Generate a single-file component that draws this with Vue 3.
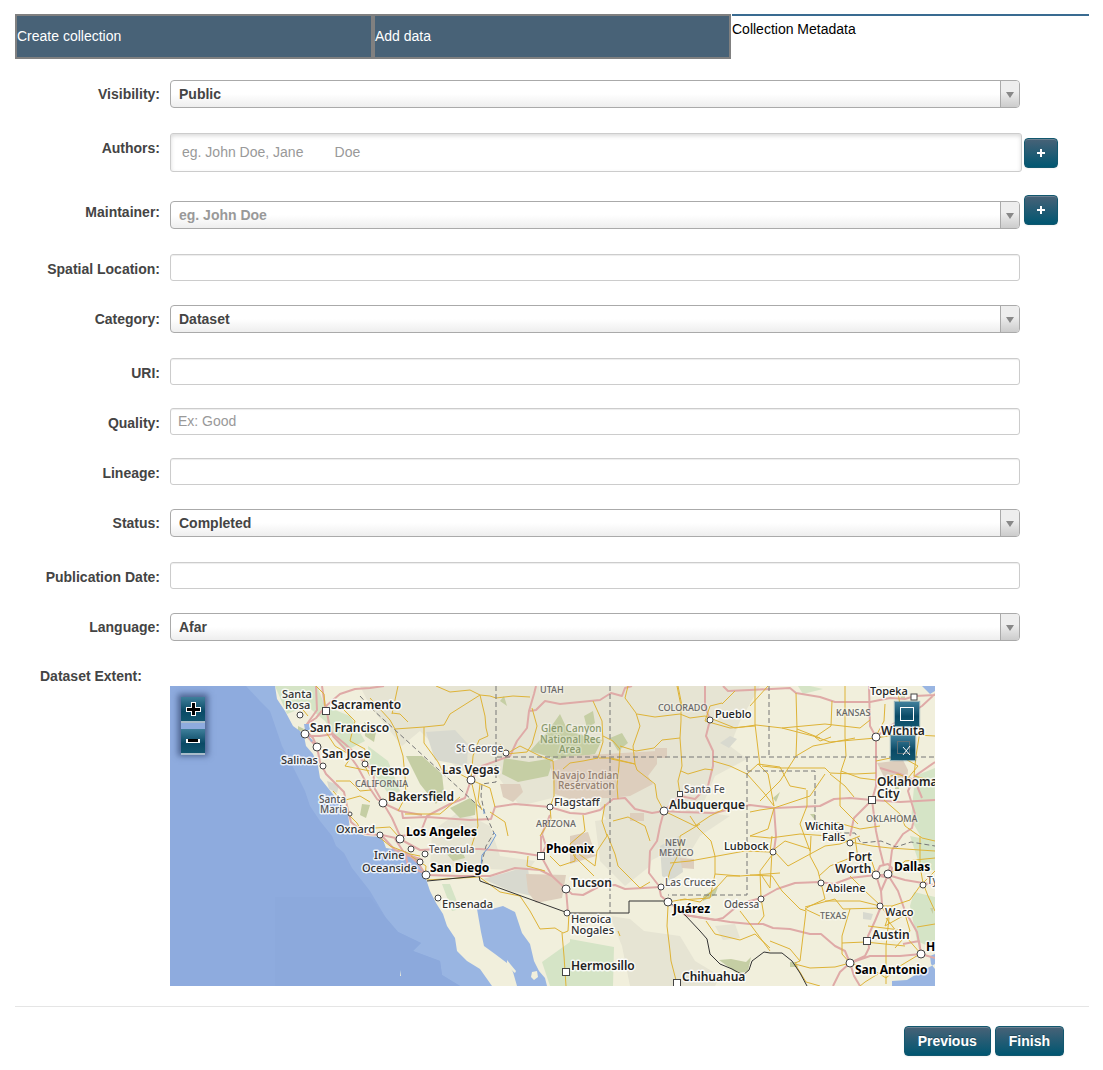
<script setup>
import { ref } from 'vue'

const tabs = [
  { id: 'create', title: 'Create collection' },
  { id: 'data', title: 'Add data' },
  { id: 'metadata', title: 'Collection Metadata' },
]
const active = 'metadata'

const fields = [
  { id: 'visibility', label: 'Visibility:', type: 'select', options: ['Public', 'Private'] },
  { id: 'authors', label: 'Authors:', type: 'text', placeholder: 'eg. John Doe, Jane        Doe', add: 'Add author' },
  { id: 'maintainer', label: 'Maintainer:', type: 'select', options: [], placeholder: 'eg. John Doe', add: 'Add maintainer' },
  { id: 'spatial', label: 'Spatial Location:', type: 'text' },
  { id: 'category', label: 'Category:', type: 'select', options: ['Dataset'] },
  { id: 'uri', label: 'URI:', type: 'text' },
  { id: 'quality', label: 'Quality:', type: 'text', placeholder: 'Ex: Good' },
  { id: 'lineage', label: 'Lineage:', type: 'text' },
  { id: 'status', label: 'Status:', type: 'select', options: ['Completed'] },
  { id: 'published', label: 'Publication Date:', type: 'text' },
  { id: 'language', label: 'Language:', type: 'select', options: ['Afar'] },
]

const values = ref({
  visibility: 'Public',
  maintainer: '',
  category: 'Dataset',
  status: 'Completed',
  language: 'Afar',
})

const highways = [
  'M146 0 147 24 137 38 135 48 147 61 150 76 156 88 166 98 174 106 177 120 181 136 195 148 212 149 230 153 250 164 270 163 310 163 345 166 371 170',
  'M137 38 146 32 156 20 170 8 185 3 200 2 214 0',
  'M156 20 159 38 163 50 175 63 187 80 197 98 207 113 213 117 222 132 230 150',
  'M137 50 150 50 163 48 175 58 190 72 203 85 205 103 213 117 230 125 252 129',
  'M155 20 152 0M147 61 143 52 137 46',
  'M230 150 250 148 257 130 280 118 295 112 301 94 312 80 340 70 347 55 357 42 359 25 364 8 366 0',
  'M360 25 366 24 375 15 390 18 400 17 430 14 441 7 452 10 455 2 462 0',
  'M232 126 233 132 257 131 300 134 321 133 325 121 345 118 380 121 400 127 415 128 430 124 443 113 455 112 465 123 482 127 494 125 510 126 545 127 560 123 580 119 605 122 650 120 664 113 680 112 702 114 730 116 765 114',
  'M535 0 535 20 540 34 536 50 543 65 543 80 538 100 525 113 510 110 494 125 490 140 487 155 480 165 479 187 489 200 491 210 498 216 515 229 545 234 553 232 565 222 580 215 591 212 607 203 625 197 650 196 664 198 680 192 706 189 718 189 735 194 753 197 765 199',
  'M212 150 225 164 240 170 248 177 256 189 290 190 320 190 345 182 370 184 382 190',
  'M371 150 371 170 382 190 396 203 398 227M396 203 402 208 413 209 430 200 445 199 455 203 491 201',
  'M371 170 376 160 372 148 380 129M235 165 238 180 254 187M225 153 235 168 253 174',
  'M515 229 560 236 580 238 593 238 603 242 620 243 640 248 651 248 665 260 675 265 680 277 695 270 699 262 698 250 705 235 712 218 711 205 718 189 720 180 722 164 733 148 742 142 745 128 738 105 745 90 765 76',
  'M714 180 710 164 706 145 702 114 706 100 706 51 700 40 699 0',
  'M680 277 700 270 730 270 751 268 765 272M751 268 747 246 735 225 728 205 718 189M751 268 749 255 733 258',
  'M680 277 670 286 663 300M680 277 684 290 690 300',
  'M706 189 711 205M706 189 710 180 718 178 722 182 720 192 710 190',
  'M580 4 620 2 626 7 650 11 665 16 700 16 720 12 735 13 745 10 765 9M706 51 720 40 735 31 752 20 765 8',
  'M702 114 684 132 680 150M604 122 606 150 604 165M553 0 558 5 580 4M710 82 730 88 745 95 752 112',
]

const roads = [
  'M146 0 154 8 155 20M170 20 185 35 180 55 195 63 194 78 200 90',
  'M166 95 180 95 190 105 201 104M163 105 172 115 190 110 200 116',
  'M152 40 165 60 182 70 175 80 200 85M178 128 187 137 193 148M130 20 138 30',
  'M200 12 220 34 225 43 233 70 235 90 236 110 228 125',
  'M225 43 254 41 274 39 280 28 310 9 300 4 280 6 266 0M310 9 320 10 326 12 343 10 360 11',
  'M254 41 254 57 268 76 272 84 290 88 301 94M310 9 315 30 316 42 318 50 309 54 303 70 301 94',
  'M222 28 228 0M238 36 230 28 222 27M301 94 320 102 325 121',
  'M301 94 306 115 308 140 300 165M320 126 335 136 338 150',
  'M272 84 283 87M235 128 270 128 290 111M310 98 308 115 312 124',
  'M362 22 367 40 362 58 357 66 336 68 330 58M336 68 350 60 370 70 383 75 384 90 384 110 380 121 381 133 370 150',
  'M423 15 432 35 433 56 428 72 413 75M433 50 443 55 450 63 449 80 447 100 448 113M441 73 465 78 463 60 470 40 466 27 455 12 458 0',
  'M413 75 400 77 393 83M429 72 441 72 465 78 467 84 485 98 487 112 494 125M450 60 466 65 484 62 492 54 510 52 511 35 511 20 507 0',
  'M467 28 485 31 510 28 520 32 535 30 555 38 565 42 586 39 612 42 643 50 660 56 706 52',
  'M510 52 512 80 508 95 510 108M511 85 518 88 535 83 543 84M508 0 512 20M552 18 565 5',
  'M543 75 560 80 577 88 588 78 610 81 620 100 636 103M585 0 585 38 590 80',
  'M552 17 540 20 535 35 560 42 585 40M577 88 594 107 604 120M588 78 598 88 604 120',
  'M626 7 627 43 626 70 610 95 590 115M662 15 661 40 645 51 650 55 661 51M675 0 675 51 676 70 671 85 670 100 670 120 688 138',
  'M612 42 655 38 690 42 700 34M626 70 643 60 685 52M627 43 650 52',
  'M592 80 610 82 655 82 660 87 685 88 706 87M660 88 675 100 684 111M671 85 690 92 706 94',
  'M604 122 598 143 580 150M604 122 640 110 655 88M637 104 637 120 630 138 640 165',
  'M715 18 714 35 706 50M728 5 730 20 748 30M745 22 750 45 746 70 744 90 765 95M706 52 730 48 765 50',
  'M706 75 730 70 748 80 738 92 728 88 706 94M714 114 730 128 735 140 752 152 765 155',
  'M413 129 415 145 400 158 404 170 424 190M435 118 432 135 437 150 427 165 425 180',
  'M443 135 458 131 475 140 480 155M437 148 445 168 448 180 470 202 480 196',
  'M494 125 525 140 540 130 560 120M530 138 510 150 510 165 500 185 496 200',
  'M520 130 528 142 541 155 545 170 545 188 540 212 510 214M500 177 520 175 542 171 575 165 600 166 602 150',
  'M545 188 570 190 610 187M498 216 515 213 530 216 548 200 557 190 570 190',
  'M498 220 497 240 500 265 501 275 507 298M536 235 545 248 570 254 585 248 600 262',
  'M570 225 580 238 600 265M592 190 600 202 602 165 615 155 640 163',
  'M580 150 600 152 630 148 660 150 680 156 702 160 720 162 765 165M605 166 618 180 655 160 670 158 690 150',
  'M605 165 590 185 591 212 594 230 588 238M641 150 640 170 648 185 651 197',
  'M649 190 660 180 680 172 700 170 706 188M651 197 655 213 640 220 635 223 650 230',
  'M580 189 602 190 612 205 630 223 636 225 630 275 625 277M625 278 640 282 665 281 680 277',
  'M635 221 665 213 673 223 711 222M655 215 690 215 710 220 722 220 740 214 750 200 753 197',
  'M711 220 719 232 716 260 716 298M680 223 672 250 672 268 680 277',
  'M698 240 730 244 751 268M672 257 695 256 735 260M716 283 695 296 684 305M680 277 705 285 716 292',
  'M600 255 620 263 630 275M625 278 636 296 650 300M735 228 740 245 725 262',
  'M750 268 730 280 716 292M753 197 758 210 765 225M753 197 765 185M747 241 765 238',
  'M680 190 695 205 711 220M685 152 688 172 706 188M750 150 750 180 753 197',
  'M719 189 735 175 765 172M716 232 730 250M722 220 715 240 740 226',
  'M257 194 290 192 309 191M308 190 330 206 350 210 360 225 370 243 385 242 393 247 398 245 399 227M392 247 394 270 396 300',
  'M208 150 220 160 240 168 250 170M241 170 256 180 255 192M205 142 220 141 228 150',
  'M380 170 390 180 405 175 405 165 425 180M375 185 357 180 358 170',
  'M665 136 690 143 710 140M580 126 590 124 604 122M598 0 580 20M450 250 448 245',
]

// Place names; y is the text baseline.
const places = [
  ['Santa', 112, 12, 'town'], ['Rosa', 115, 23, 'town'],
  ['Sacramento', 161, 23, 'city'], ['San Francisco', 140, 46, 'city'],
  ['San Jose', 152, 72, 'city'], ['Salinas', 111, 78, 'town'],
  ['Fresno', 200, 89, 'city'], ['CALIFORNIA', 185, 101, 'state'],
  ['Bakersfield', 218, 115, 'city'], ['Santa', 149, 117, 'small'],
  ['Maria', 150, 127, 'small'], ['Oxnard', 166, 147, 'town'],
  ['Los Angeles', 236, 150, 'city big'], ['Irvine', 204, 173, 'town'],
  ['Temecula', 259, 167, 'small'], ['Oceanside', 192, 186, 'town'],
  ['San Diego', 260, 186, 'city big'], ['Ensenada', 272, 222, 'town'],
  ['St George', 286, 66, 'small'], ['Las Vegas', 272, 88, 'city'],
  ['UTAH', 370, 7, 'state'], ['Glen Canyon', 371, 46, 'park'],
  ['National Rec', 370, 57, 'park'], ['Area', 389, 67, 'park'],
  ['Navajo Indian', 382, 93, 'reserve'], ['Reservation', 388, 103, 'reserve'],
  ['Flagstaff', 384, 120, 'town'], ['ARIZONA', 366, 141, 'state'],
  ['Phoenix', 376, 167, 'city big'], ['Tucson', 401, 201, 'city'],
  ['Heroica', 401, 237, 'town'], ['Nogales', 401, 248, 'town'],
  ['Hermosillo', 401, 284, 'city'], ['COLORADO', 488, 25, 'state'],
  ['Pueblo', 545, 32, 'town strong'], ['Santa Fe', 514, 107, 'small'],
  ['Albuquerque', 499, 123, 'city'], ['NEW', 495, 160, 'state'],
  ['MEXICO', 489, 170, 'state'], ['Las Cruces', 495, 200, 'small'],
  ['Juárez', 503, 227, 'city big'], ['Chihuahua', 512, 295, 'city'],
  ['Lubbock', 554, 164, 'town strong'], ['Odessa', 554, 222, 'small'],
  ['Topeka', 700, 9, 'town strong'], ['KANSAS', 666, 30, 'state'],
  ['Wichita', 711, 49, 'city'], ['Oklahoma', 707, 100, 'city'],
  ['City', 707, 112, 'city'], ['OKLAHOMA', 696, 136, 'state'],
  ['Wichita', 635, 144, 'town strong'], ['Falls', 652, 155, 'town strong'],
  ['Fort', 678, 175, 'city'], ['Worth', 665, 187, 'city'],
  ['Dallas', 724, 185, 'city big'], ['Ty', 757, 198, 'small'],
  ['Abilene', 656, 206, 'town strong'], ['Waco', 715, 230, 'town strong'],
  ['TEXAS', 650, 233, 'state'], ['Austin', 702, 253, 'city'],
  ['H', 756, 265, 'city big'], ['San Antonio', 685, 288, 'city big'],
]

const dots = [
  [130, 29, 3], [135, 48, 4], [147, 61, 4], [153, 80, 3], [195, 78, 3], [213, 117, 4],
  [180, 128, 2], [210, 149, 3], [230, 153, 4], [241, 163, 3], [255, 168, 3], [250, 176, 3],
  [256, 189, 4], [268, 212, 3], [336, 67, 3], [301, 94, 4], [380, 121, 3], [396, 203, 4],
  [397, 227, 3], [540, 34, 3], [494, 125, 4], [491, 201, 3], [498, 216, 4], [591, 213, 3],
  [603, 166, 3], [706, 51, 4], [680, 157, 3], [706, 189, 4], [718, 188, 4], [753, 199, 3],
  [651, 197, 3], [710, 220, 3], [751, 268, 4], [680, 277, 4],
]
const capitals = [[156, 25, 7], [371, 170, 7], [396, 286, 7], [510, 108, 5], [507, 297, 7], [744, 11, 6], [702, 114, 7], [697, 255, 7]]
</script>

<template>
  <form class="page" @submit.prevent>
    <nav class="tabs">
      <a
        v-for="tab in tabs"
        :key="tab.id"
        :href="'#' + tab.id"
        :class="['tab', { active: tab.id === active }]"
      >{{ tab.title }}</a>
    </nav>

    <div v-for="f in fields" :key="f.id" :class="['row', f.type, f.id]">
      <label :for="f.id">{{ f.label }}</label>
      <span v-if="f.type === 'select'" class="dropdown">
        <select :id="f.id" v-model="values[f.id]" :class="{ empty: !values[f.id] }">
          <option v-if="f.placeholder" value="" disabled>{{ f.placeholder }}</option>
          <option v-for="o in f.options" :key="o" :value="o">{{ o }}</option>
        </select>
      </span>
      <input v-else :id="f.id" v-model="values[f.id]" type="text" :placeholder="f.placeholder">
      <button v-if="f.add" type="button" class="btn add" :aria-label="f.add">
        <svg width="8" height="8" viewBox="0 0 8 8"><path d="M3 0h2v3h3v2H5v3H3V5H0V3h3z" fill="#fff" /></svg>
      </button>
    </div>

    <p class="extent">Dataset Extent:</p>
    <div class="map">
      <svg class="chart" viewBox="0 0 765 300" preserveAspectRatio="xMinYMin slice" role="img" aria-label="Dataset extent map">
        <rect width="765" height="300" fill="#f1efdc" />
        <g fill="#e6e4d3">
          <path d="M190 0H590L570 35 560 60 577 73 545 90 530 125 560 130 530 150 512 180 500 165 470 180 450 165 430 120 390 110 350 120 320 80 290 85 250 45 232 60 200 20z" />
          <path d="M440 230 460 233 474 245 510 250 525 275 550 290 545 300H460L452 260z" />
          <path d="M425 135 460 130 490 140 480 180 455 200 430 175zM545 240 565 238 570 252 553 254z" />
          <path d="M262 145 290 125 320 140 330 170 365 175 358 185 260 180z" />
        </g>
        <g fill="#d5e4c6">
          <path d="M105 0h42l8 20 25 10 15 25-20 10-20-30-18-15-20 8z" />
          <path d="M198 60l20 15 12 30-10 5-20-28zM272 198l8 0 10 25-8 2z" />
          <path d="M400 253l44 8-1 39h-43zM745 90l20-8v80l-12-8-12-20zM740 150l25 5v30l-15-5zM744 206l21 5v52l-18-8-7-35z" />
          <path d="M640 0h-12l5 8 20-5zM160 125l12 8-3 8zM372 276l28-20v44h-20z" />
        </g>
        <g fill="#c5cea4">
          <path d="M236 70 252 70 272 88 274 106 266 118 250 98zM280 122 300 112 306 118 305 129 290 132z" />
          <path d="M360 65 378 45 390 28 398 45 432 54 425 68 390 74zM334 72l25 4 25-4-6 18-30 6-16-8z" />
          <path d="M414 30l9-5 2 12-8 5zM440 52l12-5 6 10-10 8zM330 15l4-5 3 10zM276 167l15-5 4 10-12 3z" />
          <path d="M549 274l12-1 15 3 5-5-3 14-10 3zM533 210l15-9-3 8-12 6zM192 118l8 1-4 13-6-3zM360 194l14 0-2 14-8 2z" />
          <path d="M603 112l7-6-4 10zM128 40l8 4-8 1zM194 36l12 10-2 10-9-6zM182 154h8v3l-6 1zM193 153h8v4h-7z" />
          <path d="M730 8h5v4h-4zM725 100h4v3h-4zM760 222h3v6zM620 276h6l2 5h-8zM640 128h5v6z" />
        </g>
        <g fill="#d8d9cf">
          <path d="M256 46 285 44 298 58 297 80 265 74zM313 193 345 184 358 183 362 210 340 205z" />
          <path d="M490 160 509 150 513 186 500 195 492 190zM550 57l10-7 7 3-8 9zM157 95l12 4-2 8-8-4zM693 226l10 2-2 6-8-1z" />
        </g>
        <g fill="#ddcebd">
          <path d="M380 76 400 70 487 65 487 78 478 90 483 98 460 110 440 112 400 113 385 108z" />
          <path d="M356 188 396 189 392 212 366 217 358 206zM400 150l18-4 8 24-26 8z" />
          <path d="M707 77l26-3 5 10-1 14-22-5zM510 172l14 1v10l-12-1zM330 98l20 0 3 8-10 10-10-5z" />
          <path d="M485 62h12v10h-12zM460 127h14v8h-14z" />
        </g>
        <path fill="#99b5e2" d="M0 0H105L107 13 115 25 123 40 130 45 134 50 136 60 143 68 148 80 150 92 158 102 166 112 172 118 178 128 180 143 195 150 212 151 216 162 235 165 248 173 255 190 260 205 266 217 273 228 277 240 285 252 287 265 297 275 310 283 322 300H0z" />
        <path fill="#8eabde" d="M0 0H76L90 15 100 25 112 60 125 85 135 105 140 120 150 135 162 150 166 160 174 167 182 182 200 205 216 232 228 246 251 257 243 265 270 275 272 289 290 300H0z" />
        <path fill="#8ca9dc" d="M105 211h95l16 21 12 14 23 11-8 8 27 10 2 14 18 11H105z" />
        <path fill="#99b5e2" d="M307 223 322 223 333 220 345 226 349 238 352 247 360 258 364 275 369 285 375 292 377 300H347L343 286 337 277 325 268 314 260 311 246zM765 268l-5 2 1 8 4 5zM722 295l15-1 8-5 20-11v22h-43z" />
        <g fill="#f1efdc">
          <path d="M337 274l4 5 5 6-1 2-8-7zM362 286l5-1 1 6-4 3-3-3zM230 284l1 6h-1z" />
        </g>
        <g class="highways"><path v-for="(d, i) in highways" :key="i" :d="d" /></g>
        <g class="roads"><path v-for="(d, i) in roads" :key="i" :d="d" /></g>
        <path fill="#99b5e2" d="M134 38l5 0 1 6-5 0zM138 49l5 6-2 1zM752 0h13v5l-5 3z" />
        <g class="borders">
          <path d="M190 10 202 23 314 125M326 0V71H765M440 0V227M599 0V71M577 71V209H498M577 85H645V135" />
          <path d="M326 71V96L312 98 311 110 314 125 324 147 316 160 311 180 307 190M645 135l25 12 15 0 6 10 20-2 15 6 15-5 24 4" />
        </g>
        <path class="frontier" d="M257 195 309 190 310 195 398 227H459V215H498L515 229 530 245 537 253 540 268 550 278 562 283 573 289 579 284 582 275 594 266 600 267 612 267 622 275 630 287 637 300" />
        <path fill="none" stroke="#6f9bd8" d="M314 123v5M323 146l3 3-7 12-7 8-1 11" />
        <g fill="#fff" stroke="#444">
          <circle v-for="([x, y, r], i) in dots" :key="i" :cx="x" :cy="y" :r="r" />
          <rect v-for="([x, y, s], i) in capitals" :key="'c' + i" :x="x - s / 2" :y="y - s / 2" :width="s" :height="s" />
        </g>
        <text v-for="([name, x, y, kind], i) in places" :key="i" :x="x" :y="y" :class="kind">{{ name }}</text>
      </svg>

      <div class="zoom">
        <button type="button" class="tool" aria-label="Zoom in">
          <svg width="24" height="24" viewBox="0 0 24 24"><path d="M5 10h5V5h5v5h5v5h-5v4h-5v-4H5z" fill="#fff" /><path d="M6 11h5V6h3v5h5v3h-5v4h-3v-4H6z" fill="#000" /></svg>
        </button>
        <button type="button" class="tool" aria-label="Zoom out">
          <svg width="24" height="24" viewBox="0 0 24 24"><path d="M5 10h14v4H5z" fill="#fff" /><path d="M7 10h10v3H7z" fill="#000" /></svg>
        </button>
      </div>
      <button type="button" class="tool draw" aria-label="Draw extent">
        <svg width="24" height="24" viewBox="0 0 24 24"><rect x="5.500" y="5.500" width="13" height="13" fill="none" stroke="#fff" /></svg>
      </button>
      <button type="button" class="tool clear" aria-label="Clear extent">
        <svg width="24" height="24" viewBox="0 0 24 24"><rect x="6.500" y="5.500" width="12" height="12" fill="none" stroke="#5d6f78" stroke-width="1" /><path d="M12 11l7 8M19 10l-7 9" stroke="#fff" fill="none" /></svg>
      </button>
    </div>

    <footer>
      <button type="button" class="btn">Previous</button>
      <button type="submit" class="btn">Finish</button>
    </footer>
  </form>
</template>

<style>
body {
  margin: 0;
  background: #fff;
}
</style>

<style scoped>
.page {
  padding: 14px 14px 14px 15px;
  font: 14px/20px "Liberation Sans", Arial, sans-serif;
  color: #444;
}
.tabs {
  display: grid;
  grid-template-columns: repeat(3, 1fr);
  height: 45px;
  margin-bottom: 20px;
}
.tab {
  box-sizing: border-box;
  display: flex;
  align-items: center;
  padding-bottom: 2px;
  border: 2px solid #808080;
  background: #486277;
  color: #fff;
  text-decoration: none;
}
.tab.active {
  align-items: flex-start;
  margin-left: 1px;
  padding-top: 3px;
  border: 0;
  border-top: 2px solid #396b91;
  background: #fff;
  color: #000;
}
.row {
  display: grid;
  grid-template-columns: 145px 1fr 69px;
  align-items: start;
  height: 50px;
}
.row label {
  padding-top: 5px;
  font-weight: bold;
  text-align: right;
  white-space: nowrap;
}
.row > input,
.dropdown {
  margin: 0 0 0 10px;
}
.row.select {
  height: 54px;
}
.row.authors {
  grid-template-columns: 145px 1fr 67px;
  height: 62px;
}
.row.maintainer {
  height: 59px;
}
.row.maintainer label {
  padding-top: 7px;
}
input {
  box-sizing: border-box;
  min-width: 0;
  height: 27px;
  padding: 0 7px 2px;
  border: 1px solid #ccc;
  border-radius: 3px;
  box-shadow: inset 0 1px 1px rgba(0, 0, 0, 0.075);
  color: #444;
  font: inherit;
}
input::placeholder {
  color: #999;
  opacity: 1;
}
.authors input {
  height: 39px;
  padding: 0 11px 2px;
  box-shadow: inset 0 2px 4px rgba(0, 0, 0, 0.15);
}
.dropdown {
  position: relative;
  display: block;
  margin-top: 1px;
}
.maintainer .dropdown {
  margin-top: 6px;
}
select {
  appearance: none;
  display: block;
  box-sizing: border-box;
  width: 100%;
  height: 28px;
  padding: 0 28px 0 8px;
  border: 1px solid #aaa;
  border-radius: 4px;
  background: linear-gradient(#fff 50%, #eee);
  color: #444;
  font: bold 14px/26px "Liberation Sans", Arial, sans-serif;
}
select.empty {
  color: #999;
}
.dropdown::before {
  content: "";
  position: absolute;
  top: 1px;
  right: 1px;
  bottom: 1px;
  width: 18px;
  border-left: 1px solid #aaa;
  border-radius: 0 3px 3px 0;
  background: linear-gradient(#eee 40%, #ccc);
  pointer-events: none;
}
.dropdown::after {
  content: "";
  position: absolute;
  top: 12px;
  right: 6px;
  border: 4px solid transparent;
  border-top: 6px solid #888;
  border-bottom: 0;
  pointer-events: none;
}
.btn {
  height: 30px;
  padding: 0 13px;
  border: 1px solid #12586f;
  border-radius: 4px;
  background: linear-gradient(#486277, #005671);
  box-shadow: inset 0 1px 0 rgba(255, 255, 255, 0.2), 0 1px 2px rgba(0, 0, 0, 0.05);
  color: #fff;
  font: bold 14px/20px "Liberation Sans", Arial, sans-serif;
  text-shadow: 0 -1px 0 rgba(0, 0, 0, 0.25);
}
.add {
  display: flex;
  align-items: center;
  justify-content: center;
  width: 34px;
  padding: 0;
  margin-left: 4px;
}
.authors .add {
  margin: 5px 0 0 2px;
}
.extent {
  margin: 0 0 0 25px;
  font-weight: bold;
}
.map {
  position: relative;
  height: 300px;
  max-width: 765px;
  margin-left: 155px;
  overflow: hidden;
}
.chart {
  display: block;
  width: 100%;
  height: 100%;
}
.chart text {
  fill: #333;
  stroke: #fff;
  stroke-opacity: 0.8;
  stroke-width: 3px;
  stroke-linejoin: round;
  paint-order: stroke;
  font: 500 11px "Noto Sans", "Open Sans", sans-serif;
}
.chart .city {
  fill: #222;
  font-size: 12px;
  font-weight: 600;
}
.chart .big {
  fill: #000;
  font-weight: 700;
}
.chart .strong {
  fill: #222;
}
.chart .small {
  fill: #555;
  font-size: 10px;
}
.chart .state {
  fill: #666;
  stroke-opacity: 0.3;
  font-size: 9px;
}
.chart .park {
  fill: #899a6b;
  stroke-opacity: 0.3;
  font-size: 10px;
}
.chart .reserve {
  fill: #94806f;
  stroke-opacity: 0.3;
  font-size: 10px;
}
.highways {
  fill: none;
  stroke: #dfaaa7;
  stroke-width: 2px;
  stroke-linejoin: round;
}
.roads {
  fill: none;
  stroke: #deb337;
  stroke-width: 1px;
  stroke-linejoin: round;
}
.borders {
  fill: none;
  stroke: #777;
  stroke-dasharray: 5 3;
}
.frontier {
  fill: none;
  stroke: #333;
}
.tool {
  display: block;
  width: 24px;
  height: 24px;
  padding: 0;
  border: 0;
  background: linear-gradient(#3f7f9b, #0a4a66 60%, #12566f);
  box-shadow: 0 0 1px 1px rgba(60, 120, 150, 0.5);
}
.tool svg {
  display: block;
}
.zoom {
  position: absolute;
  top: 11px;
  left: 11px;
  display: grid;
  gap: 8px;
}
.zoom {
  box-shadow: 0 0 6px 3px rgba(30, 50, 90, 0.6);
}
.zoom .tool {
  box-shadow: 0 2px 0 0 #a9bccb;
}
.draw,
.clear {
  position: absolute;
  top: 16px;
  right: 16px;
}
.clear {
  top: 50px;
  right: 20px;
}
footer {
  display: flex;
  justify-content: flex-end;
  gap: 4px;
  margin-top: 20px;
  padding: 19px 25px 0 0;
  border-top: 1px solid #e5e5e5;
}
</style>
